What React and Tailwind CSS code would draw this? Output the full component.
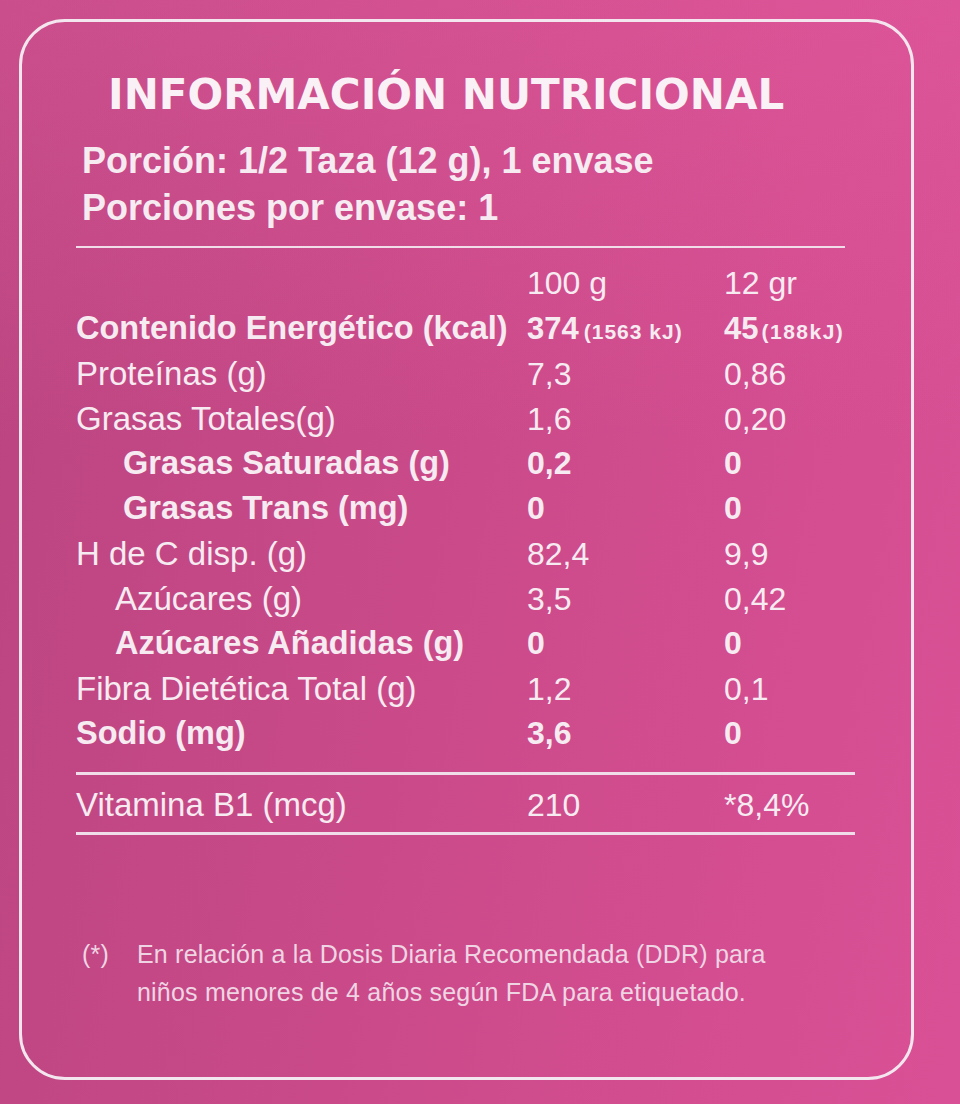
const rows = [
  { label: 'Proteínas (g)', a: '7,3', b: '0,86' },
  { label: 'Grasas Totales(g)', a: '1,6', b: '0,20' },
  { label: 'Grasas Saturadas (g)', a: '0,2', b: '0', bold: true, indent: 'pl-[47px]' },
  { label: 'Grasas Trans (mg)', a: '0', b: '0', bold: true, indent: 'pl-[47px]' },
  { label: 'H de C disp. (g)', a: '82,4', b: '9,9' },
  { label: 'Azúcares (g)', a: '3,5', b: '0,42', indent: 'pl-[39px]' },
  { label: 'Azúcares Añadidas (g)', a: '0', b: '0', bold: true, indent: 'pl-[39px]' },
  { label: 'Fibra Dietética Total (g)', a: '1,2', b: '0,1' },
  { label: 'Sodio (mg)', a: '3,6', b: '0', bold: true },
]

function Row({ label, a, b, bold, indent = '' }) {
  const weight = bold ? 'font-bold text-[32.5px]' : 'font-normal text-[33px]'
  return (
    <div className="grid grid-cols-[451px_197px_1fr] h-[45px] items-baseline leading-[45px]">
      <div className={`${weight} ${indent} whitespace-nowrap`}>{label}</div>
      <div className={`${bold ? 'font-bold' : 'font-normal'} text-[32px]`}>{a}</div>
      <div className={`${bold ? 'font-bold' : 'font-normal'} text-[32px]`}>{b}</div>
    </div>
  )
}

export default function App() {
  return (
    <div className="w-[960px] h-[1104px] overflow-hidden pt-[19px] pl-[19px] bg-[linear-gradient(180deg,rgba(240,100,168,0.3)_0%,rgba(240,100,168,0)_40%),linear-gradient(100deg,#ba4580_0%,#ca4a89_45%,#da5096_100%)] font-['Liberation_Sans',Arial,sans-serif] text-[#f7ebf2]">
      <div className="w-[895px] h-[1061px] rounded-[46px] border-[3px] border-[#f4e6ee] pl-[54px] pt-[52px]">
        <h1 className="ml-[32px] font-['DejaVu_Sans',sans-serif] font-bold text-[42px] leading-[42px] text-[#f9f1f6] whitespace-nowrap">
          INFORMACIÓN NUTRICIONAL
        </h1>
        <div className="mt-[21px] ml-[6px] font-bold text-[36px] leading-[47px]">
          <div>Porción: 1/2 Taza (12 g), 1 envase</div>
          <div>Porciones por envase: 1</div>
        </div>
        <div className="mt-[15px] w-[769px] h-[2px] bg-[#f1dde9]" />
        <div className="mt-[13px] w-[779px]">
          <div className="grid grid-cols-[451px_197px_1fr] h-[45px] items-baseline leading-[45px] text-[32px]">
            <div />
            <div>100 g</div>
            <div>12 gr</div>
          </div>
          <div className="grid grid-cols-[451px_197px_1fr] h-[45px] items-baseline leading-[45px] font-bold">
            <div className="text-[32.5px] whitespace-nowrap">Contenido Energético (kcal)</div>
            <div className="whitespace-nowrap">
              <span className="text-[31px]">374</span>
              <span className="ml-[5px] text-[21px] tracking-[1px]">(1563 kJ)</span>
            </div>
            <div className="whitespace-nowrap">
              <span className="text-[31px]">45</span>
              <span className="ml-[3px] text-[21px] tracking-[1.5px]">(188kJ)</span>
            </div>
          </div>
          {rows.map((r) => (
            <Row key={r.label} {...r} />
          ))}
          <div className="mt-[16px] h-[3px] bg-[#f1dde9]" />
          <div className="mt-[7px]">
            <Row label="Vitamina B1 (mcg)" a="210" b="*8,4%" />
          </div>
          <div className="mt-[5px] h-[3px] bg-[#f1dde9]" />
        </div>
        <div className="mt-[100px] ml-[6px] flex text-[25px] tracking-[0.2px] leading-[38px] text-[#efd5e4]">
          <div className="w-[55px] shrink-0">(*)</div>
          <div>
            En relación a la Dosis Diaria Recomendada (DDR) para
            <br />
            niños menores de 4 años según FDA para etiquetado.
          </div>
        </div>
      </div>
    </div>
  )
}
